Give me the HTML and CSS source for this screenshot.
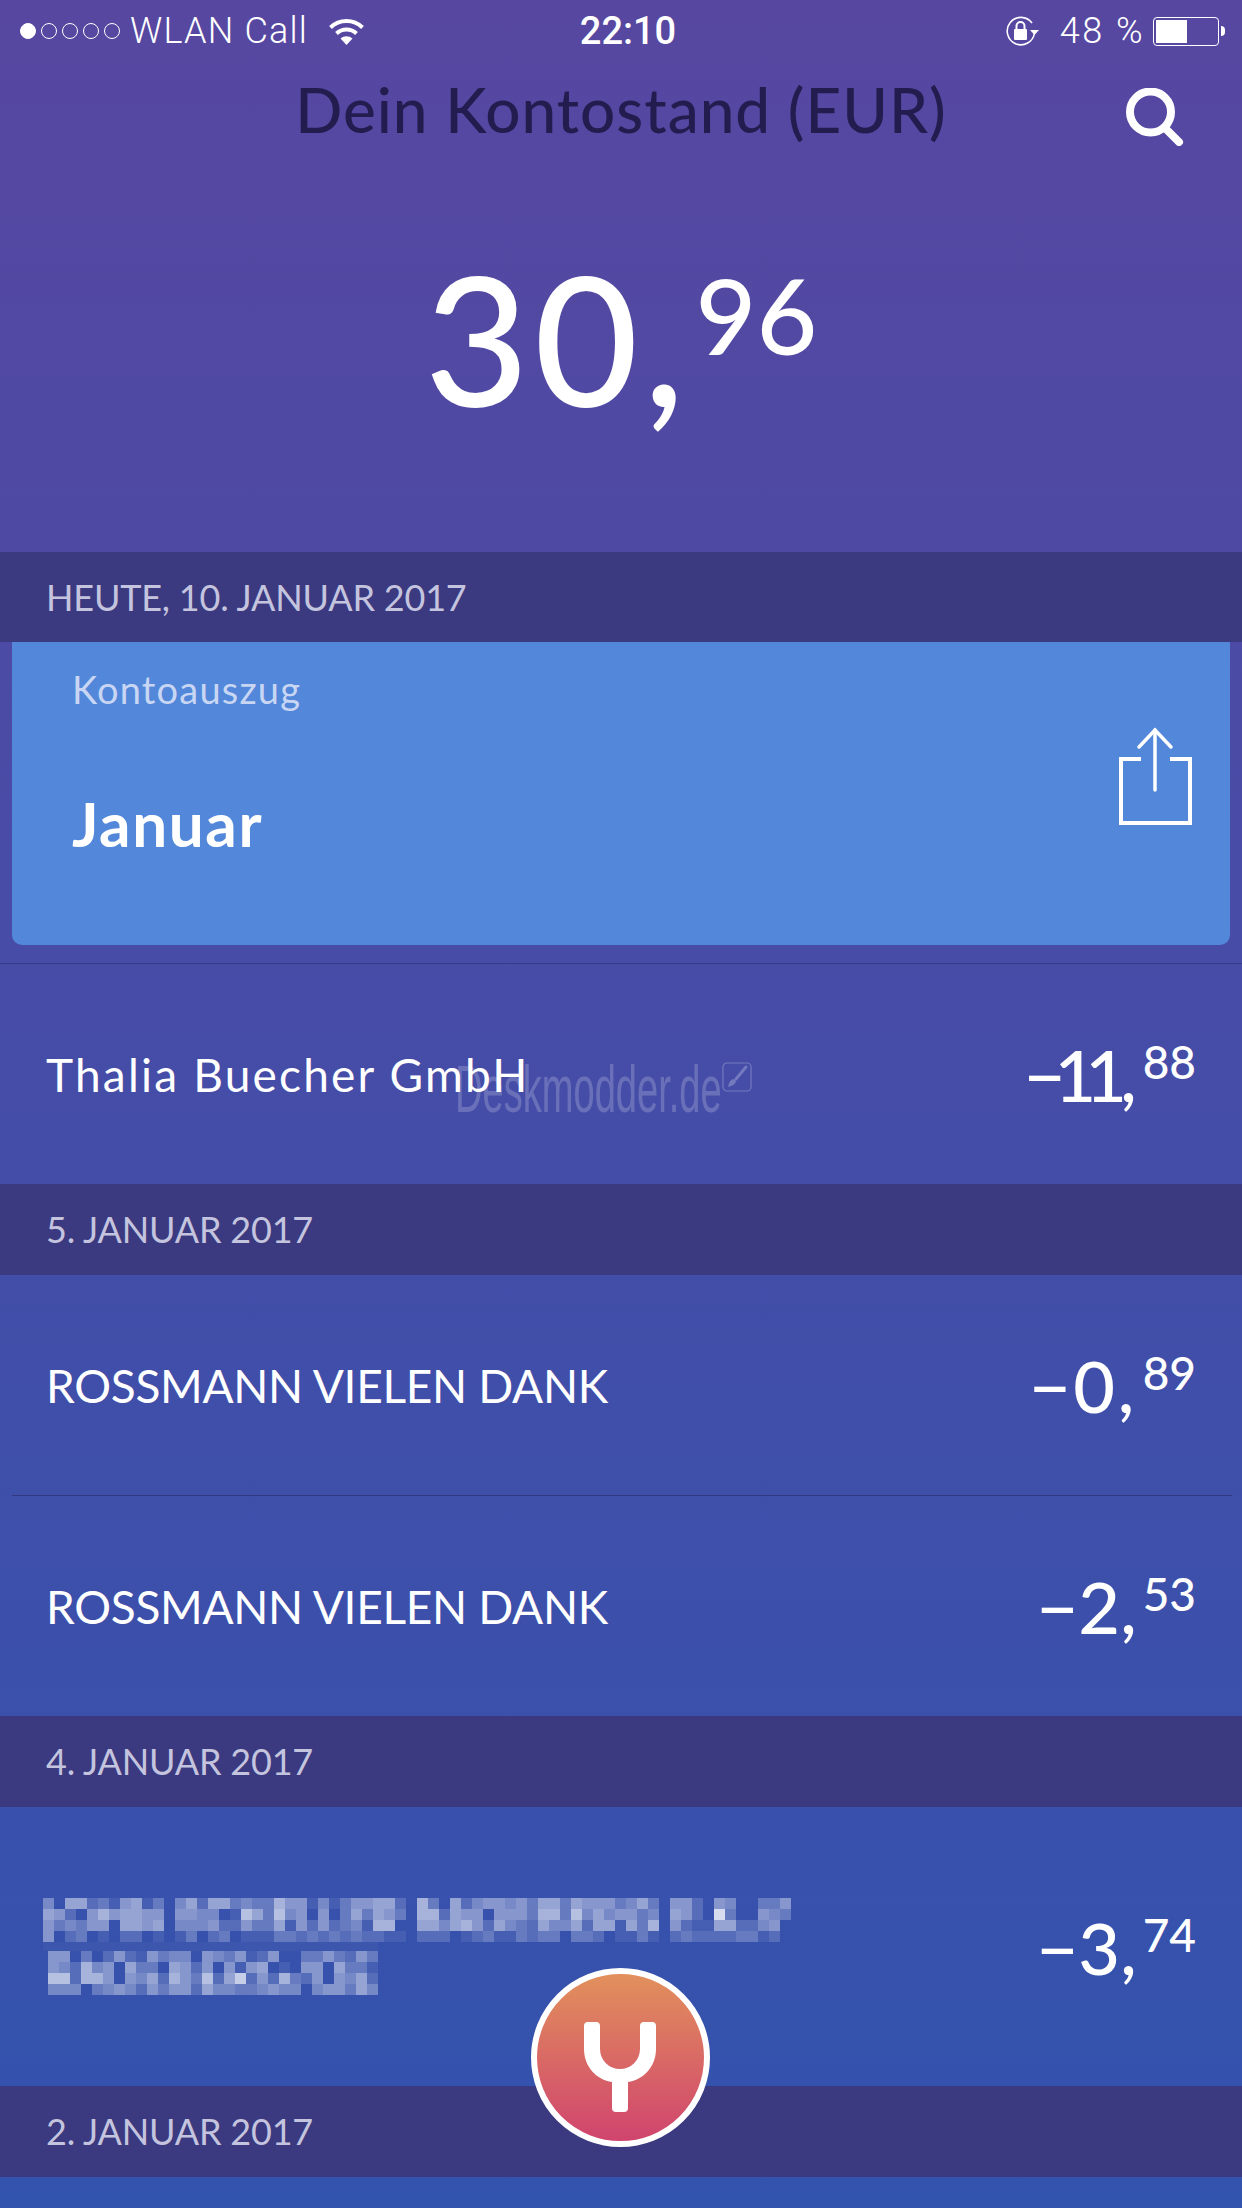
FILE: index.html
```html
<!DOCTYPE html>
<html>
<head>
<meta charset="utf-8">
<title>Dein Kontostand</title>
<link rel="stylesheet" href="styles.css">
</head>
<body>
<div class="screen">
  <div class="top">
    <div class="status">
      <div class="status-left">
        <div class="dots"><i class="on"></i><i></i><i></i><i></i><i></i></div>
        <span class="carrier">WLAN Call</span>
        <svg class="wifi" width="37" height="27" viewBox="0 0 37 27">
          <path d="M2.5 9.5A23 23 0 0 1 34.5 9.5" fill="none" stroke="#fff" stroke-width="4"/>
          <path d="M8.5 15.5A14.5 14.5 0 0 1 28.5 15.5" fill="none" stroke="#fff" stroke-width="4"/>
          <path d="M12.5 20.5A9 9 0 0 1 24.5 20.5L18.5 27z" fill="#fff"/>
        </svg>
      </div>
      <div class="clock">22:10</div>
      <div class="status-right">
        <svg class="rotlock" width="34" height="30" viewBox="0 0 34 30">
          <path d="M29.5 17A13.7 13.7 0 1 1 27 7" fill="none" stroke="#fff" stroke-width="1.6"/>
          <path d="M25 14h9l-4.5 5z" fill="#fff"/>
          <rect x="9" y="13" width="13" height="11" rx="1" fill="#fff"/>
          <path d="M11.5 13V10a4 4 0 0 1 8 0v3" fill="none" stroke="#fff" stroke-width="2"/>
        </svg>
        <span class="percent">48 %</span>
        <div class="battery"><div class="battery-fill"></div></div>
        <div class="battery-nub"></div>
      </div>
    </div>
    <div class="title-row">
      <h1 class="title">Dein Kontostand (EUR)</h1>
      <svg class="search" width="58" height="58" viewBox="0 0 58 58">
        <circle cx="24.5" cy="24" r="20.5" fill="none" stroke="#fff" stroke-width="8"/>
        <path d="M39 40L53 54" stroke="#fff" stroke-width="8" stroke-linecap="round"/>
      </svg>
    </div>
    <div class="balance">30,<span class="balance-cents">96</span></div>
  </div>

  <div class="day day-first">HEUTE, 10. JANUAR 2017</div>
  <div class="card">
    <div class="card-text">
      <div class="card-label">Kontoauszug</div>
      <div class="card-name">Januar</div>
    </div>
    <svg class="share" width="73" height="100" viewBox="0 0 73 100">
      <path d="M22 33H2V97H71V33H51" fill="none" stroke="#fff" stroke-width="4"/>
      <path d="M36 4V64" stroke="#fff" stroke-width="3.5" stroke-linecap="round"/>
      <path d="M20 21L36 4L52 21" fill="none" stroke="#fff" stroke-width="3.5" stroke-linecap="round"/>
    </svg>
  </div>

  <div class="row row-first">
    <span class="name">Thalia Buecher GmbH</span>
    <span class="amount"><span class="ones">−11</span><span class="comma">,</span><span class="cents">88</span></span>
  </div>
  <div class="day">5. JANUAR 2017</div>
  <div class="row">
    <span class="name name-caps">ROSSMANN VIELEN DANK</span>
    <span class="amount amount-wide">−0,<span class="cents">89</span></span>
  </div>
  <div class="row-line"></div>
  <div class="row">
    <span class="name name-caps">ROSSMANN VIELEN DANK</span>
    <span class="amount">−2,<span class="cents">53</span></span>
  </div>
  <div class="day">4. JANUAR 2017</div>
  <div class="row row-tall">
    <div class="blur">
      <div class="mosaic mosaic-long" id="blur1"></div>
      <div class="blur-gap"></div>
      <div class="mosaic mosaic-short" id="blur2"></div>
    </div>
    <span class="amount">−3,<span class="cents">74</span></span>
  </div>
  <div class="day">2. JANUAR 2017</div>

  <div class="watermark">Deskmodder.de</div>
  <svg class="watermark-icon" width="30" height="30" viewBox="0 0 30 30">
    <rect x="1" y="1" width="28" height="28" rx="4" fill="none" stroke="#fff" stroke-width="1.2"/>
    <path d="M24 5L14 17" stroke="#fff" stroke-width="3" stroke-linecap="round"/>
    <path d="M12 17c-3 0-5 3-6 8c4-1 8-3 8-6z" fill="#fff"/>
  </svg>

  <div class="fab">
    <svg width="167" height="167" viewBox="6 6 167 167">
      <path fill="#fff" d="M57 54h8a4 4 0 0 1 4 4v23a20 20 0 0 0 40 0v-23a4 4 0 0 1 4-4h8a4 4 0 0 1 4 4v23c0 18-13 31-28 33v26a4 4 0 0 1-4 4h-8a4 4 0 0 1-4-4v-26c-15-2-28-15-28-33v-23a4 4 0 0 1 4-4z"/>
    </svg>
  </div>
</div>
<script src="mosaic.js"></script>
</body>
</html>
```

FILE: styles.css
```css
html, body { margin: 0; padding: 0; }
body { width: 1242px; height: 2208px; overflow: hidden; }

.screen {
  position: relative;
  width: 1242px;
  height: 2208px;
  overflow: hidden;
  background: linear-gradient(180deg, #5747a1 0%, #3253ae 100%);
  font-family: Lato, "Noto Sans", sans-serif;
  color: #fff;
}

/* header */
.top { height: 552px; }

.status {
  display: grid;
  grid-template-columns: 1fr auto 1fr;
  align-items: center;
  height: 62px;
  font-family: Roboto, "Liberation Sans", sans-serif;
  font-size: 36px;
}
.status-left { display: flex; align-items: center; padding-left: 20px; }
.status-right { display: flex; align-items: center; justify-content: flex-end; padding-right: 17px; }
.dots { display: flex; gap: 5px; }
.dots i {
  display: block;
  box-sizing: border-box;
  width: 16px;
  height: 16px;
  border: 1.2px solid #fff;
  border-radius: 50%;
}
.dots i.on { background: #fff; }
.carrier { margin-left: 10px; font-weight: 300; letter-spacing: 1.2px; }
.wifi { margin-left: 20px; }
.clock { padding-left: 14px; font-weight: 500; font-size: 38px; }
.rotlock { margin-right: 21px; }
.percent { font-weight: 300; margin-right: 8px; letter-spacing: 2.5px; }
.battery {
  box-sizing: border-box;
  width: 66px;
  height: 29px;
  padding: 2px;
  border: 1.2px solid #fff;
  border-radius: 4px;
}
.battery-fill { width: 31px; height: 100%; background: #fff; }
.battery-nub {
  width: 4px;
  height: 10px;
  margin-left: 2px;
  background: #fff;
  border-radius: 0 5px 5px 0;
}

.title-row {
  display: flex;
  justify-content: center;
  height: 98px;
  padding-top: 8px;
  position: relative;
}
.title {
  margin: 0;
  font-size: 62px;
  font-weight: 500;
  line-height: 78px;
  color: #231d4f;
  letter-spacing: 1px;
}
.search { position: absolute; left: 1126px; top: 26px; }

.balance {
  padding-top: 64px;
  text-align: center;
  font-size: 180px;
  line-height: 210px;
  font-weight: 500;
  letter-spacing: 5px;
}
.balance-cents {
  margin-left: 6px;
  font-size: 105px;
  line-height: 0;
  vertical-align: 52px;
  letter-spacing: 0;
}

/* list */
.day {
  box-sizing: border-box;
  height: 91px;
  padding-left: 46px;
  background: #3b3a80;
  color: #c4c4df;
  font-size: 36px;
  line-height: 91px;
  letter-spacing: -0.2px;
}
.day-first { height: 90px; }

.card {
  display: flex;
  justify-content: space-between;
  box-sizing: border-box;
  height: 303px;
  margin: 0 12px 18px;
  padding: 0 38px 0 60px;
  background: #5287da;
  border-radius: 0 0 10px 10px;
}
.card-label { margin-top: 25px; font-size: 38px; line-height: 44px; color: #c8d6f3; letter-spacing: 1.2px; }
.card-name { margin-top: 76px; font-size: 62px; line-height: 72px; font-weight: 700; letter-spacing: 1.6px; }
.share { margin-top: 84px; }

.row {
  display: flex;
  align-items: center;
  justify-content: space-between;
  box-sizing: border-box;
  height: 220px;
  padding: 0 46px;
}
.row-first { border-top: 1px solid rgba(35, 29, 79, 0.35); height: 221px; }
.row-tall { height: 279px; padding-left: 43px; }
.row-line { height: 1px; margin: 0 10px 0 12px; background: rgba(35, 29, 79, 0.45); }

.name { font-size: 46px; letter-spacing: 2.2px; }
.name-caps { letter-spacing: -0.3px; }
.amount { font-size: 72px; line-height: 80px; font-weight: 500; }
.amount-wide { letter-spacing: 2.5px; }
.ones { letter-spacing: -11px; }
.comma { margin-left: 4px; }
.cents { margin-left: 6px; font-size: 46px; line-height: 0; vertical-align: 23px; letter-spacing: 0; }

/* blurred out merchant name */
.mosaic { display: grid; grid-auto-rows: 11px; }
.mosaic-long { grid-template-columns: repeat(68, 11px); }
.mosaic-short { grid-template-columns: repeat(30, 11px); margin-left: 5px; }
.blur-gap { width: 335px; height: 9px; background: rgba(255, 255, 255, 0.03); }

/* overlays */
.watermark {
  position: absolute;
  left: 455px;
  top: 1051px;
  font-family: "Liberation Sans", sans-serif;
  font-size: 66px;
  line-height: 76px;
  color: rgba(255, 255, 255, 0.2);
  white-space: nowrap;
  transform: scaleX(0.577);
  transform-origin: left top;
}
.watermark-icon { position: absolute; left: 722px; top: 1062px; opacity: 0.25; }

.fab {
  position: absolute;
  left: 531px;
  top: 1968px;
  width: 167px;
  height: 167px;
  border: 6px solid #fff;
  border-radius: 50%;
  background: linear-gradient(180deg, #e2905c 0%, #d0446e 100%);
}
.fab svg { display: block; }
```

FILE: mosaic.js
```js
// values are strength of white per cell, 0-a
var longRows = [
  "40662315613046266343375514135566207306245545366365553463055205400335",
  "6520575665505544018638450503636530772655055537738464553406520a300543",
  "53435506656044452253361525234177006646752643264462661637052116622450",
  "50230102201013023011133232323221102220123113233033201131023222233120"
];
var shortRows = [
  "550302521534405435125003353253",
  "542745063306525051560105506331",
  "882775054627538269252732505462",
  "444034542535526443345440455364"
];

function fillMosaic(id, rows) {
  var box = document.getElementById(id);
  rows.forEach(function(row) {
    for (var i = 0; i < row.length; i++) {
      var cell = document.createElement("div");
      cell.style.background = "rgba(255,255,255," + parseInt(row[i], 16) * 0.08 + ")";
      box.appendChild(cell);
    }
  });
}

fillMosaic("blur1", longRows);
fillMosaic("blur2", shortRows);
```
